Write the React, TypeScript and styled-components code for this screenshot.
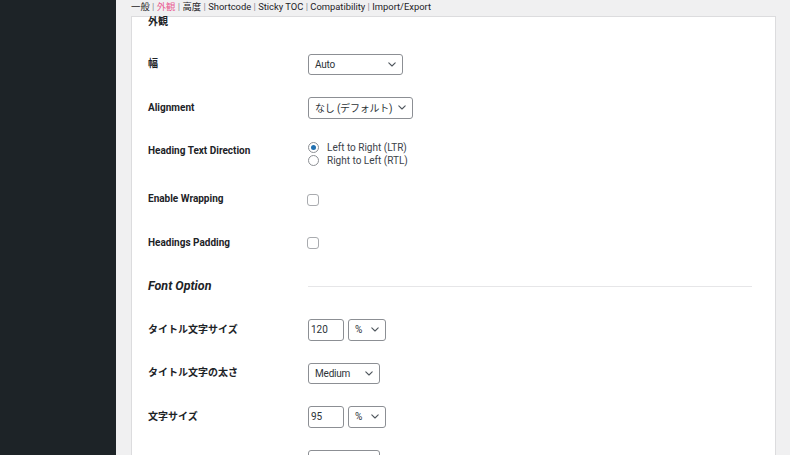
import React, { FC } from 'react';
import styled, { createGlobalStyle } from 'styled-components';

const GlobalStyle = createGlobalStyle`
  html, body {
    margin: 0;
    padding: 0;
    height: 100%;
    overflow: hidden;
    background: #f0f0f1;
  }
  body {
    font-family: Roboto, "Noto Sans CJK JP", sans-serif;
    color: #1d2327;
  }
`;

const Chevron: FC = () => (
  <svg width="8" height="5" viewBox="0 0 8 5" fill="none">
    <path d="M0.8 0.8 L4 4 L7.2 0.8" stroke="#50575e" strokeWidth="1.1" strokeLinecap="round" strokeLinejoin="round" />
  </svg>
);

const Select: FC<{ width: number; value: string }> = ({ width, value }) => (
  <SelectBox $width={width}>
    <span>{value}</span>
    <Chevron />
  </SelectBox>
);

const tabs = ['一般', '外観', '高度', 'Shortcode', 'Sticky TOC', 'Compatibility', 'Import/Export'];

const App: FC = () => {
  return (
    <Page>
      <GlobalStyle />
      <Sidebar />
      <Main>
        <Tabs>
          {tabs.map((t, i) => (
            <React.Fragment key={t}>
              {i > 0 && <Sep>{' | '}</Sep>}
              <Tab $current={t === '外観'}>{t}</Tab>
            </React.Fragment>
          ))}
        </Tabs>
        <Panel>
          <Title>外観</Title>
          <Row>
            <Label>幅</Label>
            <Field>
              <Select width={95} value="Auto" />
            </Field>
          </Row>
          <Row>
            <Label>Alignment</Label>
            <Field>
              <Select width={105} value="なし (デフォルト)" />
            </Field>
          </Row>
          <Row>
            <Label>Heading Text Direction</Label>
            <Field>
              <RadioLine>
                <Radio $checked />
                Left to Right (LTR)
              </RadioLine>
              <RadioLine>
                <Radio />
                Right to Left (RTL)
              </RadioLine>
            </Field>
          </Row>
          <Row>
            <Label>Enable Wrapping</Label>
            <Field>
              <Checkbox />
            </Field>
          </Row>
          <Row>
            <Label>Headings Padding</Label>
            <Field>
              <Checkbox />
            </Field>
          </Row>
          <Row>
            <SectionLabel>Font Option</SectionLabel>
            <Field>
              <Rule />
            </Field>
          </Row>
          <Row>
            <Label>タイトル文字サイズ</Label>
            <Field>
              <Inline>
                <NumberBox>120</NumberBox>
                <Select width={38} value="%" />
              </Inline>
            </Field>
          </Row>
          <Row>
            <Label>タイトル文字の太さ</Label>
            <Field>
              <Select width={72} value="Medium" />
            </Field>
          </Row>
          <Row>
            <Label>文字サイズ</Label>
            <Field>
              <Inline>
                <NumberBox>95</NumberBox>
                <Select width={38} value="%" />
              </Inline>
            </Field>
          </Row>
          <Row>
            <Label></Label>
            <Field>
              <Select width={72} value="" />
            </Field>
          </Row>
        </Panel>
      </Main>
    </Page>
  );
};

const Page = styled.div`
  display: flex;
  width: 790px;
  height: 455px;
  overflow: hidden;
`;

const Sidebar = styled.div`
  width: 116px;
  flex-shrink: 0;
  background: #1d2327;
`;

const Main = styled.div`
  flex: 1;
  padding: 0 14px 0 15px;
  background: #f0f0f1;
`;

const Tabs = styled.div`
  height: 13px;
  margin-bottom: 3px;
  font-size: 9.4px;
  line-height: 13px;
  white-space: pre;
  color: #1d2327;
`;

const Tab = styled.span<{ $current?: boolean }>`
  color: ${(p) => (p.$current ? '#e95f93' : '#1d2327')};
`;

const Sep = styled.span`
  color: #8c8f94;
`;

const Panel = styled.div`
  background: #fff;
  border: 1px solid #dcdcde;
  border-bottom: none;
  padding-left: 16px;
  height: 600px;
`;

const Title = styled.div`
  height: 25px;
  font-size: 10px;
  font-weight: 700;
  line-height: 10px;
`;

const Row = styled.div`
  display: flex;
  align-items: flex-start;
`;

const Label = styled.div`
  width: 160px;
  flex-shrink: 0;
  padding: 15px 0 14px;
  font-size: 10px;
  font-weight: 700;
  line-height: 13px;
`;

const SectionLabel = styled(Label)`
  font-size: 12.5px;
  font-style: italic;
`;

const Field = styled.div`
  flex: 1;
  padding: 11.5px 23px 10.5px 0;
  min-height: 21.5px;
  display: flex;
  flex-direction: column;
  justify-content: center;
  font-size: 10px;
`;

const Inline = styled.div`
  display: flex;
  gap: 4px;
`;

const SelectBox = styled.div<{ $width: number }>`
  box-sizing: border-box;
  width: ${(p) => p.$width}px;
  height: 21.5px;
  border: 1px solid #8c8f94;
  border-radius: 3px;
  display: flex;
  align-items: center;
  justify-content: space-between;
  padding: 0 6px 0 6px;
  font-size: 10px;
  color: #2c3338;
  white-space: nowrap;
  overflow: hidden;
  background: #fff;

  span {
    letter-spacing: -0.2px;
  }
`;

const NumberBox = styled.div`
  box-sizing: border-box;
  width: 36px;
  height: 21.5px;
  border: 1px solid #8c8f94;
  border-radius: 3px;
  display: flex;
  align-items: center;
  padding-left: 2px;
  font-size: 10px;
  color: #2c3338;
`;

const RadioLine = styled.div`
  display: flex;
  align-items: center;
  height: 13px;
  gap: 8px;
  color: #3c434a;
  font-size: 10px;
`;

const Radio = styled.span<{ $checked?: boolean }>`
  box-sizing: border-box;
  width: 11px;
  height: 11px;
  border-radius: 50%;
  border: 1px solid #8c8f94;
  display: flex;
  align-items: center;
  justify-content: center;

  &::after {
    content: '';
    width: 5px;
    height: 5px;
    border-radius: 50%;
    background: #2271b1;
    display: ${(p) => (p.$checked ? 'block' : 'none')};
  }
`;

const Checkbox = styled.span`
  box-sizing: border-box;
  display: block;
  width: 12px;
  height: 12px;
  margin-left: -1px;
  margin-top: 1px;
  border: 1px solid #8c8f94;
  border-radius: 3px;
  opacity: 0.75;
`;

const Rule = styled.div`
  height: 1px;
  background: #e6e6e8;
`;

export default App;
